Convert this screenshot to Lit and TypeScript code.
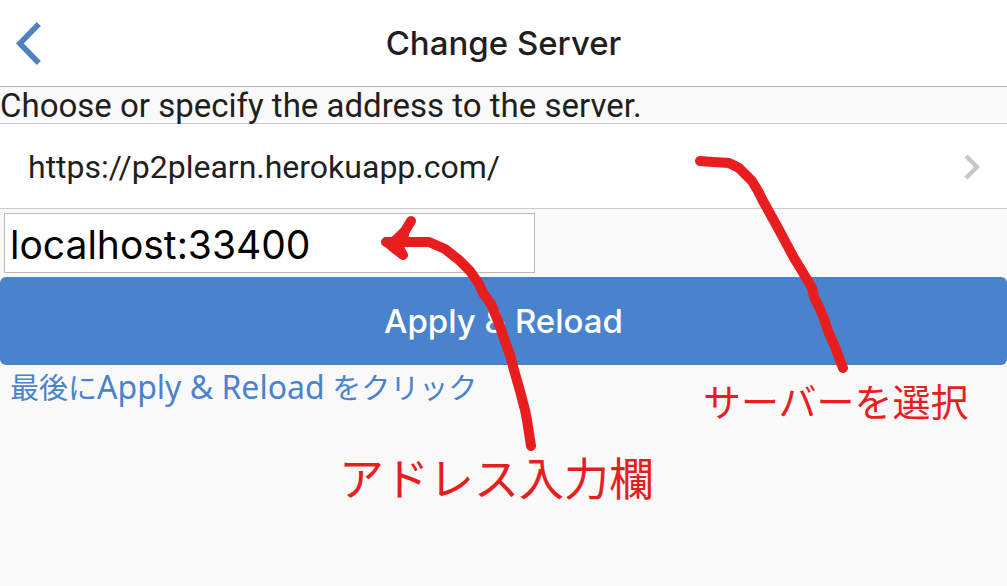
import { LitElement, html, css } from "lit";
import { customElement, property } from "lit/decorators.js";

@customElement("app-root")
export class AppRoot extends LitElement {
  @property() server = "https://p2plearn.herokuapp.com/";
  @property() address = "localhost:33400";

  static styles = css`
    :host {
      display: block;
      position: relative;
      min-height: 100vh;
      overflow: hidden;
      background: #f9f9f9;
      color: #1f1f21;
      font-family: Roboto, "Noto Sans CJK JP", sans-serif;
      font-size: 33px;
      line-height: 36px;
    }
    * {
      box-sizing: border-box;
    }
    .toolbar {
      display: grid;
      grid-template-columns: 64px 1fr 64px;
      align-items: center;
      height: 87px;
      background: #fff;
      border-bottom: 1px solid #b6b6b6;
    }
    .back {
      display: flex;
      padding: 0 0 0 16px;
      border: 0;
      background: none;
    }
    .title {
      margin: 0;
      text-align: center;
      font-family: Inter, sans-serif;
      font-size: 33px;
      font-weight: 500;
    }
    .intro {
      display: block;
      padding-top: 1px;
      line-height: 35px;
    }
    .server {
      display: flex;
      align-items: center;
      justify-content: space-between;
      width: 100%;
      height: 86px;
      padding: 2px 26px 0 28px;
      border: solid #ccc;
      border-width: 1px 0;
      background: #fff;
      color: inherit;
      font-family: inherit;
      font-size: 32px;
      text-align: left;
    }
    .address {
      display: block;
      width: 531px;
      max-width: calc(100% - 8px);
      height: 60px;
      margin: 4px;
      padding: 2px 5px 0;
      border: 1px solid #bbb;
      border-radius: 0;
      background: #fff;
      color: #000;
      font-family: Inter, sans-serif;
      font-size: 39px;
    }
    .apply {
      display: block;
      width: 100%;
      height: 88px;
      border: 0;
      border-radius: 6px;
      background: #4a83cd;
      color: #fff;
      font-family: Inter, sans-serif;
      font-size: 33px;
      font-weight: 500;
    }
    .note {
      margin: 0;
      padding: 4px 10px;
      color: #4a83cd;
      font-family: "Noto Sans", "Noto Sans CJK JP", sans-serif;
      font-size: 29px;
    }
    .term {
      font-size: 32px;
    }
    .marks {
      position: absolute;
      top: 0;
      left: 0;
      pointer-events: none;
    }
    .callout {
      position: absolute;
      color: #e81e1e;
      font-family: "Noto Sans CJK JP", sans-serif;
      white-space: nowrap;
    }
    .callout-server {
      left: 703px;
      top: 374px;
      font-size: 38px;
      line-height: 52px;
    }
    .callout-address {
      left: 339px;
      top: 449px;
      font-size: 45px;
      line-height: 56px;
    }
  `;

  render() {
    return html`
      <header class="toolbar">
        <button class="back" aria-label="Back">
          <svg width="26" height="44" viewBox="0 0 26 44" fill="none" stroke="#4f81bd" stroke-width="5.6">
            <path d="M22.8 3 3.8 22.5 22.8 42" />
          </svg>
        </button>
        <h1 class="title">Change Server</h1>
      </header>
      <main>
        <label class="intro" for="address">Choose or specify the address to the server.</label>
        <button class="server">
          <span>${this.server}</span>
          <svg width="17" height="26" viewBox="0 0 17 26" fill="none" stroke="#c7c7cc" stroke-width="4.4">
            <path d="M2 2 13 13 2 24" />
          </svg>
        </button>
        <input class="address" id="address" type="text" .value=${this.address} />
        <button class="apply">Apply &amp; Reload</button>
        <p class="note">最後に<span class="term">Apply &amp; Reload</span> をクリック</p>
      </main>
      <svg class="marks" width="1007" height="586" viewBox="0 0 1007 586" fill="none"
        stroke="#e81e1e" stroke-width="10" stroke-linecap="round" stroke-linejoin="round" aria-hidden="true">
        <path d="M700 161 L713 162 L729 163 L733 165 L739 168 L752 181 L758 191 L763 201 L778 228 L786 243 L794 258 L802 271 L812 288 L814 297 L820 309 L824 319 L828 331 L835 347 L843 368" />
        <path d="M386 242 L429 242 L445 249 L459 260 L470 271 L479 284 L483 293 L491 304 L498 321 L506 344 L510 355 L514 370 L520 391 L525 410 L527 420 L531 446" />
        <path d="M411 221 L405 231 L394 242 L403 255" />
        <path d="M387 242 L394 248 L402 254 L397 243 L404 235 L396 240" />
      </svg>
      <span class="callout callout-server">サーバーを選択</span>
      <span class="callout callout-address">アドレス入力欄</span>
    `;
  }
}
